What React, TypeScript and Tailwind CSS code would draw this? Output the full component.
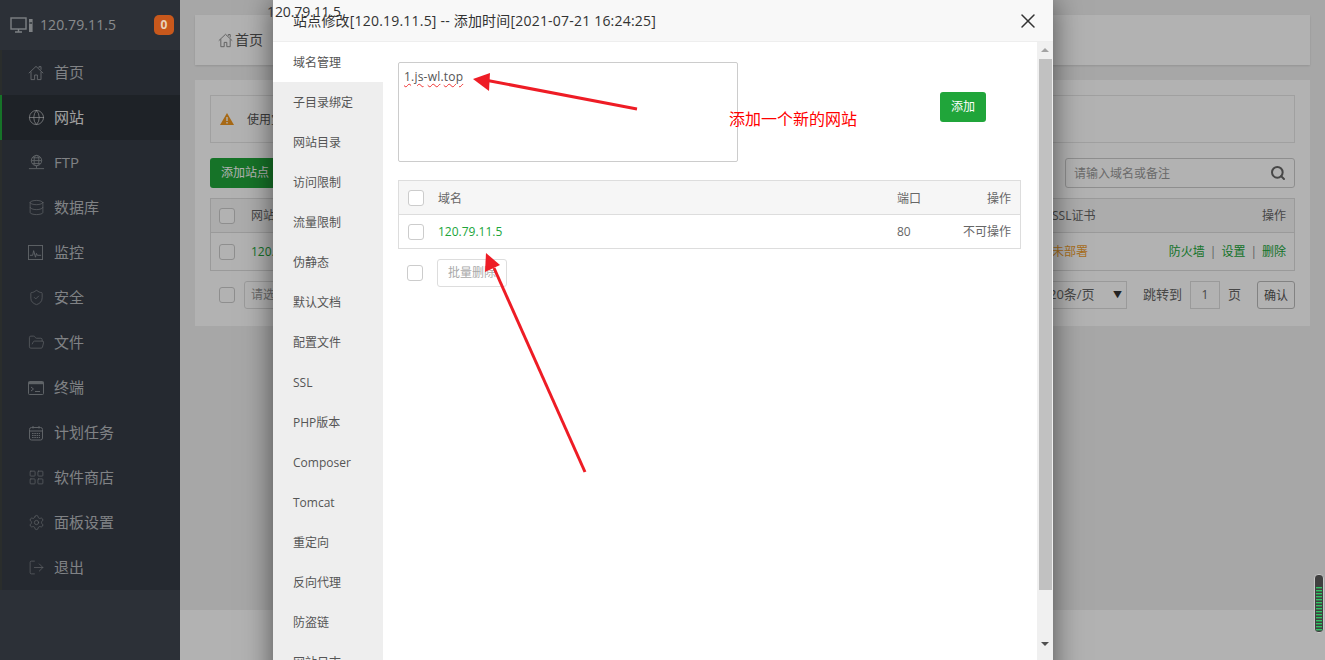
import {
  Database,
  FolderOpen,
  Globe,
  LayoutGrid,
  LogOut,
  Search,
  Settings,
  ShieldCheck,
  X,
} from "lucide-react";
import type { ReactNode } from "react";

const iconCls = "h-[17px] w-[17px] text-[#898e94]";

function HomeIcon({ className }: { className: string }) {
  return (
    <svg viewBox="0 0 16 16" className={className} fill="none" stroke="currentColor" strokeWidth="1">
      <path d="M0.8 8.2 8 1.4l7.2 6.8M3 6.6v8h3.6V10h2.8v4.6H13V6.6M11 3V1.6h2v3.2" />
    </svg>
  );
}

function FtpIcon() {
  return (
    <svg viewBox="0 0 18 18" className={iconCls} fill="none" stroke="currentColor" strokeWidth="1">
      <circle cx="9" cy="7" r="5.5" />
      <ellipse cx="9" cy="7" rx="2.5" ry="5.5" />
      <path d="M3.5 7h11M4.5 4h9M4.5 10h9M9 12.5V15M1 15.5h16" />
    </svg>
  );
}

function MonitorIcon() {
  return (
    <svg viewBox="0 0 24 16" className="h-4 w-6 text-[#b4b8bc]" fill="none" stroke="currentColor" strokeWidth="1.4">
      <rect x="1" y="1" width="15" height="11" />
      <path d="M5 15h7M8.5 12v3" />
      <rect x="19" y="2" width="3.6" height="13" fill="currentColor" stroke="none" />
      <path d="M19.5 6h2.6" stroke="#3c444d" />
    </svg>
  );
}

function ChartIcon() {
  return (
    <svg viewBox="0 0 16 16" className="h-[15px] w-[15px] text-[#898e94]" fill="none" stroke="currentColor" strokeWidth="1">
      <rect x="0.5" y="0.5" width="15" height="15" />
      <path d="M2 11h3l1-5 2 7 1-4 1 2h4" />
    </svg>
  );
}

function TerminalIcon() {
  return (
    <svg viewBox="0 0 16 14" className="h-[14px] w-4 text-[#898e94]" fill="none" stroke="currentColor" strokeWidth="1">
      <rect x="0.5" y="0.5" width="15" height="13" rx="1" />
      <path d="M0.5 2h15" strokeWidth="2.4" />
      <path d="M3 6l2.5 2L3 10M7 10.5h5" />
    </svg>
  );
}

function CalendarIcon() {
  return (
    <svg viewBox="0 0 16 16" className="h-4 w-4 text-[#898e94]" fill="none" stroke="currentColor" strokeWidth="1">
      <rect x="1.5" y="2.5" width="13" height="12.5" rx="2" />
      <path d="M1.5 6h13M5 1v2.5M11 1v2.5" />
      <path d="M4 8.5h8M4 10.5h8M4 12.5h8" strokeDasharray="1.6 0.7" />
    </svg>
  );
}

function WarnIcon() {
  return (
    <svg viewBox="0 0 14 12" className="mr-[13px] h-[12px] w-[14px]">
      <path d="M7 0 14 12H0Z" fill="#f0971f" />
      <path d="M7 4v4M7 9v1.5" stroke="#fff" strokeWidth="1.4" />
    </svg>
  );
}

const menu: { label: string; icon: ReactNode; active?: boolean }[] = [
  { label: "首页", icon: <HomeIcon className="h-4 w-4 text-[#898e94]" /> },
  { label: "网站", icon: <Globe className="h-[17px] w-[17px] text-[#c8cbce]" strokeWidth={1} />, active: true },
  { label: "FTP", icon: <FtpIcon /> },
  { label: "数据库", icon: <Database className={iconCls} strokeWidth={1} /> },
  { label: "监控", icon: <ChartIcon /> },
  { label: "安全", icon: <ShieldCheck className={iconCls} strokeWidth={1} /> },
  { label: "文件", icon: <FolderOpen className={iconCls} strokeWidth={1} /> },
  { label: "终端", icon: <TerminalIcon /> },
  { label: "计划任务", icon: <CalendarIcon /> },
  { label: "软件商店", icon: <LayoutGrid className={iconCls} strokeWidth={1} /> },
  { label: "面板设置", icon: <Settings className={iconCls} strokeWidth={1} /> },
  { label: "退出", icon: <LogOut className={iconCls} strokeWidth={1} /> },
];

const tabs = [
  "域名管理",
  "子目录绑定",
  "网站目录",
  "访问限制",
  "流量限制",
  "伪静态",
  "默认文档",
  "配置文件",
  "SSL",
  "PHP版本",
  "Composer",
  "Tomcat",
  "重定向",
  "反向代理",
  "防盗链",
  "网站日志",
];

function Check() {
  return <span className="block h-4 w-4 shrink-0 rounded-[3px] border border-[#ccc] bg-white" />;
}

function Sidebar() {
  return (
    <aside className="flex w-[180px] shrink-0 flex-col bg-[#3f4650]">
      <div className="flex h-[50px] items-center pl-[10px] pr-[6px]">
        <MonitorIcon />
        <span className="ml-[6px] text-sm tracking-[0.1px] text-[#c4c7ca]">120.79.11.5</span>
        <span className="relative z-10 ml-auto flex h-5 w-5 items-center justify-center rounded-[5px] bg-[#c8581c] text-xs font-bold text-[#e8d2bc]">
          0
        </span>
      </div>
      <nav className="bg-[#363c46]">
        {menu.map((m) => (
          <div
            key={m.label}
            className={
              m.active
                ? "flex h-[45px] items-center border-l-2 border-[#20a53a] bg-[#2c3138] pl-[26px]"
                : "flex h-[45px] items-center border-l-2 border-[#3d4140] pl-[26px]"
            }
          >
            <span className="flex w-[26px] items-center">{m.icon}</span>
            <span className={m.active ? "text-[15px] text-[#e8e8e8]" : "text-[15px] text-[#b8bbbf]"}>{m.label}</span>
          </div>
        ))}
      </nav>
    </aside>
  );
}

function MainPanel() {
  return (
    <main className="flex min-w-0 flex-1 flex-col bg-[#f0f0f0]">
      <div className="flex-1 px-[15px] pt-[15px]">
        <div className="flex h-[50px] items-center bg-white pl-[23px] text-sm text-[#555] shadow-[0_1px_2px_rgba(0,0,0,0.12)]">
          <HomeIcon className="mr-[2px] h-[15px] w-[15px] text-[#888]" />
          首页
        </div>
        <section className="mt-[15px] h-[246px] bg-white px-[15px] pt-[15px]">
          <div className="flex h-[48px] items-center border border-[#e6e6e6] pl-[9px] text-xs text-[#555]">
            <WarnIcon />
            <span className="pt-[2px]">使用宝塔面板创建站点时会自动创建权限配置</span>
          </div>
          <div className="mt-[15px] flex h-[30px] items-center justify-between">
            <span className="flex h-full w-[120px] items-center rounded-[3px] bg-[#20a53a] pl-[11px] text-xs text-white">
              添加站点
            </span>
            <span className="flex h-full w-[230px] items-center justify-between rounded-[3px] border border-[#ccc] pl-2 pr-[8px] text-xs text-[#999]">
              <span className="pt-[2px]">请输入域名或备注</span>
              <Search className="h-4 w-4 text-[#666]" strokeWidth={3} />
            </span>
          </div>
          <div className="mt-[10px] border border-[#ddd] text-xs">
            <div className="flex h-[34px] items-center justify-between border-b border-[#ddd] bg-[#f6f6f6] px-[8px] text-[#666]">
              <span className="flex items-center gap-[16px]">
                <Check />
                网站名
              </span>
              <span className="flex w-[234px] justify-between">
                <span>SSL证书</span>
                <span>操作</span>
              </span>
            </div>
            <div className="flex h-[37px] items-center justify-between px-[8px]">
              <span className="flex items-center gap-[16px] text-[#20a53a]">
                <Check />
                120.79.11.5
              </span>
              <span className="flex w-[234px] justify-between">
                <span className="text-[#f0a030]">未部署</span>
                <span className="flex gap-[5px] text-[#20a53a]">
                  防火墙<span className="text-[#888]">|</span>设置<span className="text-[#888]">|</span>删除
                </span>
              </span>
            </div>
          </div>
          <div className="mt-[10px] flex h-[28px] items-center justify-between pl-[9px] text-xs text-[#666]">
            <span className="flex items-center gap-[9px]">
              <Check />
              <span className="flex h-[28px] w-[120px] items-center rounded-[3px] border border-[#ddd] pl-[6px] text-[#999]">
                请选择批量操作
              </span>
            </span>
            <span className="flex items-center text-[13px]">
              <span className="flex h-[28px] w-[90px] items-center justify-between border border-[#ddd] pr-[4px]">
                <span className="pl-[11px]">20条/页</span>
                <span className="text-[9px] text-[#333]">▼</span>
              </span>
              <span className="ml-4">跳转到</span>
              <span className="ml-2 flex h-[28px] w-[30px] items-center justify-center border border-[#ddd] text-xs">1</span>
              <span className="ml-2">页</span>
              <span className="ml-4 flex h-[28px] w-[38px] items-center justify-center rounded-[3px] border border-[#bbb] pt-[2px] text-xs text-[#555]">确认</span>
            </span>
          </div>
        </section>
      </div>
      <div className="h-[50px] shrink-0 bg-white" />
    </main>
  );
}

function DomainTab() {
  const wave = "underline decoration-[#e33] decoration-wavy decoration-1 underline-offset-2";
  return (
    <div className="min-w-0 flex-1 px-[15px] pt-5">
      <div className="flex items-center">
        <div className="h-[100px] w-[340px] shrink-0 rounded-[2px] border border-[#ccc] px-[5px] py-[4px] text-xs leading-5 tracking-[0.2px] text-[#555]">
          <span className={wave}>1</span>.<span className={wave}>js</span>-<span className={wave}>wl</span>.<span className={wave}>top</span>
        </div>
        <button className="mb-[10px] ml-[202px] h-[30px] w-[46px] rounded-[3px] bg-[#20a53a] text-xs text-white">添加</button>
      </div>
      <div className="mt-[18px] w-[623px] border border-[#ddd] text-xs text-[#666]">
        <div className="flex h-[34px] items-center border-b border-[#ddd] bg-[#f6f6f6] px-[9px]">
          <Check />
          <span className="ml-[14px] flex-1 pt-[2px]">域名</span>
          <span className="w-[44px] pt-[2px]">端口</span>
          <span className="w-[70px] pt-[2px] text-right">操作</span>
        </div>
        <div className="flex h-[33px] items-center px-[9px]">
          <Check />
          <span className="ml-[14px] flex-1 text-[#20a53a]">120.79.11.5</span>
          <span className="w-[44px]">80</span>
          <span className="w-[70px] text-right">不可操作</span>
        </div>
      </div>
      <div className="mt-[10px] flex items-center pl-[9px]">
        <Check />
        <span className="ml-[14px] flex h-[28px] w-[70px] items-center justify-center rounded-[3px] border border-[#ddd] text-xs text-[#aaa]">
          批量删除
        </span>
      </div>
    </div>
  );
}

function Modal() {
  return (
    <div className="absolute left-[273px] top-0 flex h-[700px] w-[780px] flex-col bg-white shadow-[0_0_28px_rgba(0,0,0,0.55)]">
      <header className="flex h-[42px] shrink-0 items-center justify-between border-b border-[#eee] bg-[#f8f8f8] pl-5 pr-[13px] text-sm tracking-[0.2px] text-[#333]">
        站点修改[120.19.11.5] -- 添加时间[2021-07-21 16:24:25]
        <X className="mt-[1px] h-6 w-6 text-[#333]" strokeWidth={1.5} />
      </header>
      <div className="flex min-h-0 flex-1">
        <ul className="w-[110px] shrink-0 bg-[#eee] text-xs text-[#555]">
          {tabs.map((t, i) => (
            <li key={t} className={i === 0 ? "flex h-10 items-center bg-white pl-5 pt-[2px]" : "flex h-10 items-center pl-5 pt-[2px]"}>
              {t}
            </li>
          ))}
        </ul>
        <DomainTab />
        <div className="flex w-4 shrink-0 flex-col items-center bg-[#f0f0f0] pt-[6px]">
          <span className="h-0 w-0 border-x-4 border-b-4 border-x-transparent border-b-[#a3a3a3]" />
          <span className="mt-[7px] h-[531px] w-[13px] bg-[#c1c1c1]" />
          <span className="mt-[52px] h-0 w-0 border-x-4 border-t-4 border-x-transparent border-t-[#505050]" />
        </div>
      </div>
    </div>
  );
}

function Arrows() {
  return (
    <svg className="pointer-events-none absolute inset-0 h-full w-full" viewBox="0 0 1325 660">
      <path d="M637 109 485 80" stroke="#ee1c25" strokeWidth="3" fill="none" />
      <path d="M473 79 490 73 489 91Z" fill="#ee1c25" />
      <path d="M585 472 494 268" stroke="#ee1c25" strokeWidth="3" fill="none" />
      <path d="M486 253 500 265 485 272Z" fill="#ee1c25" />
    </svg>
  );
}

function SoundBar() {
  const ticks = Array.from({ length: 15 }, (_, i) => i);
  return (
    <svg className="absolute left-[1314px] top-[574px] h-[59px] w-[10px]" viewBox="0 0 10 59">
      <rect x="0.5" y="0.5" width="9" height="58" rx="3.5" fill="#404040" stroke="#c8c8c8" />
      {ticks.map((i) => (
        <rect key={i} x="2" y={13 + i * 3} width="6" height="1.4" fill="#2fc463" />
      ))}
    </svg>
  );
}

export default function App() {
  return (
    <div className="relative h-screen w-full overflow-hidden font-['Open_Sans','Noto_Sans_CJK_SC',sans-serif]">
      <div className="flex h-full w-full">
        <Sidebar />
        <MainPanel />
      </div>
      <div className="absolute inset-0 bg-black/30" />
      <Modal />
      <span className="absolute left-[267px] top-[2px] text-sm tracking-[-0.1px] text-[#333]">120.79.11.5</span>
      <span className="absolute left-[729px] top-[107px] text-base text-[#f00]">添加一个新的网站</span>
      <Arrows />
      <SoundBar />
    </div>
  );
}
